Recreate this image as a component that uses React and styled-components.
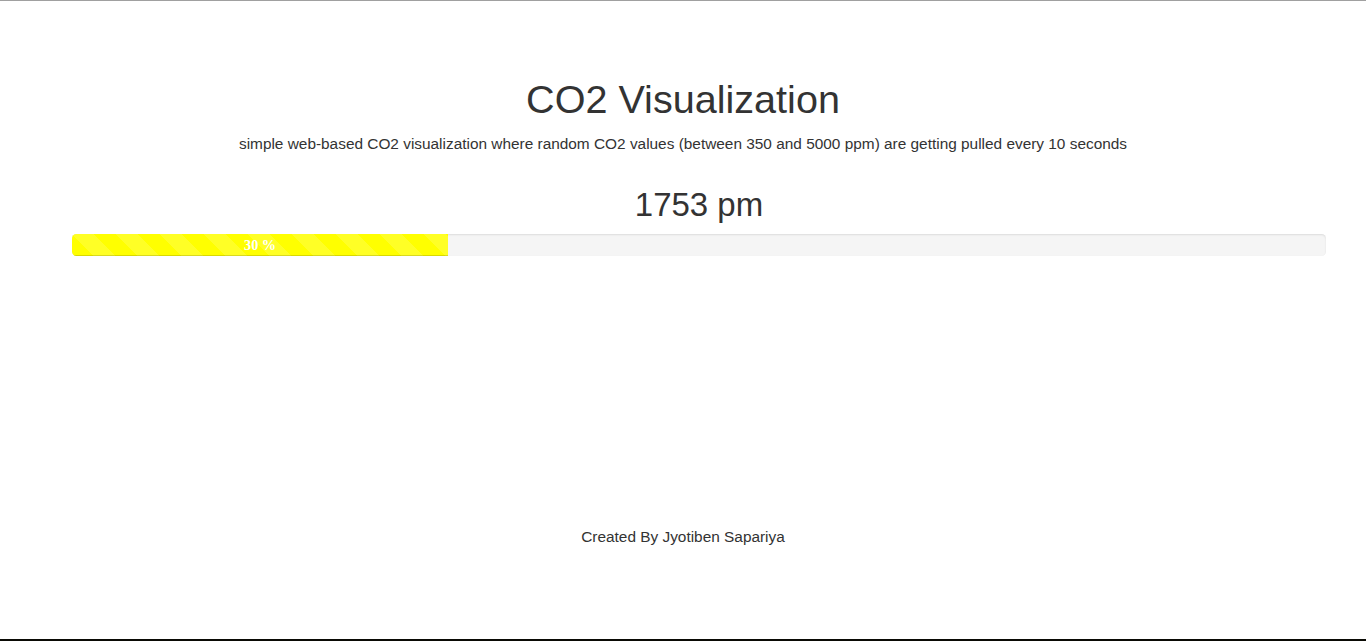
import React from 'react';
import styled, { createGlobalStyle } from 'styled-components';

const GlobalStyle = createGlobalStyle`
  html, body {
    margin: 0;
    padding: 0;
    background: #fff;
  }
  body {
    font-family: "Liberation Sans", Arial, Helvetica, sans-serif;
    font-size: 15.4px;
    line-height: 1.42857;
    color: #333;
  }
  * { box-sizing: border-box; }
`;

const Page = styled.div`
  height: 641px;
  display: flex;
  flex-direction: column;
  border-top: 1px solid #a0a0a0;
  border-bottom: 2px solid #0a0a04;
`;

const Header = styled.header`
  text-align: center;
`;

const Title = styled.h1`
  margin: 77px 0 0;
  font-size: 39.6px;
  font-weight: 500;
  line-height: 1.1;
`;

const Lead = styled.p`
  margin: 11.5px 0 0;
  font-size: 15.4px;
  line-height: 22px;
`;

const Reading = styled.section`
  padding: 0 40px 0 72px;
`;

const Value = styled.h2`
  margin: 31.5px 0 11px;
  text-align: center;
  font-size: 33px;
  font-weight: 500;
  line-height: 1.1;
`;

const Track = styled.div`
  height: 22px;
  background: #f5f5f5;
  border-radius: 4.4px;
  box-shadow: inset 0 1px 2px rgba(0, 0, 0, 0.1);
  overflow: hidden;
`;

const Fill = styled.div`
  height: 100%;
  background-color: ${p => p.$color};
  background-image: linear-gradient(
    45deg,
    rgba(255, 255, 255, 0.15) 25%,
    transparent 25%,
    transparent 50%,
    rgba(255, 255, 255, 0.15) 50%,
    rgba(255, 255, 255, 0.15) 75%,
    transparent 75%,
    transparent
  );
  background-size: 44px 44px;
  box-shadow: inset 0 -1px 0 rgba(0, 0, 0, 0.15);
  color: #fff;
  text-align: center;
  font-family: "Liberation Serif", "Times New Roman", serif;
  font-weight: bold;
  font-size: 14.3px;
  line-height: 22px;
`;

const Footer = styled.footer`
  margin-top: 270.5px;
  text-align: center;
  font-size: 15.4px;
  line-height: 22px;
`;

const MIN = 350;
const MAX = 5000;

export default function App() {
  const ppm = 1753;
  const percent = 30;

  return (
    <>
      <GlobalStyle />
      <Page>
        <Header>
          <Title>CO2 Visualization</Title>
          <Lead>
            simple web-based CO2 visualization where random CO2 values (between {MIN} and {MAX} ppm) are getting pulled every 10 seconds
          </Lead>
        </Header>
        <Reading>
          <Value>{ppm} pm</Value>
          <Track>
            <Fill $color="#ffff00" style={{ width: `${percent}%` }}>
              {percent} %
            </Fill>
          </Track>
        </Reading>
        <Footer>Created By Jyotiben Sapariya</Footer>
      </Page>
    </>
  );
}
